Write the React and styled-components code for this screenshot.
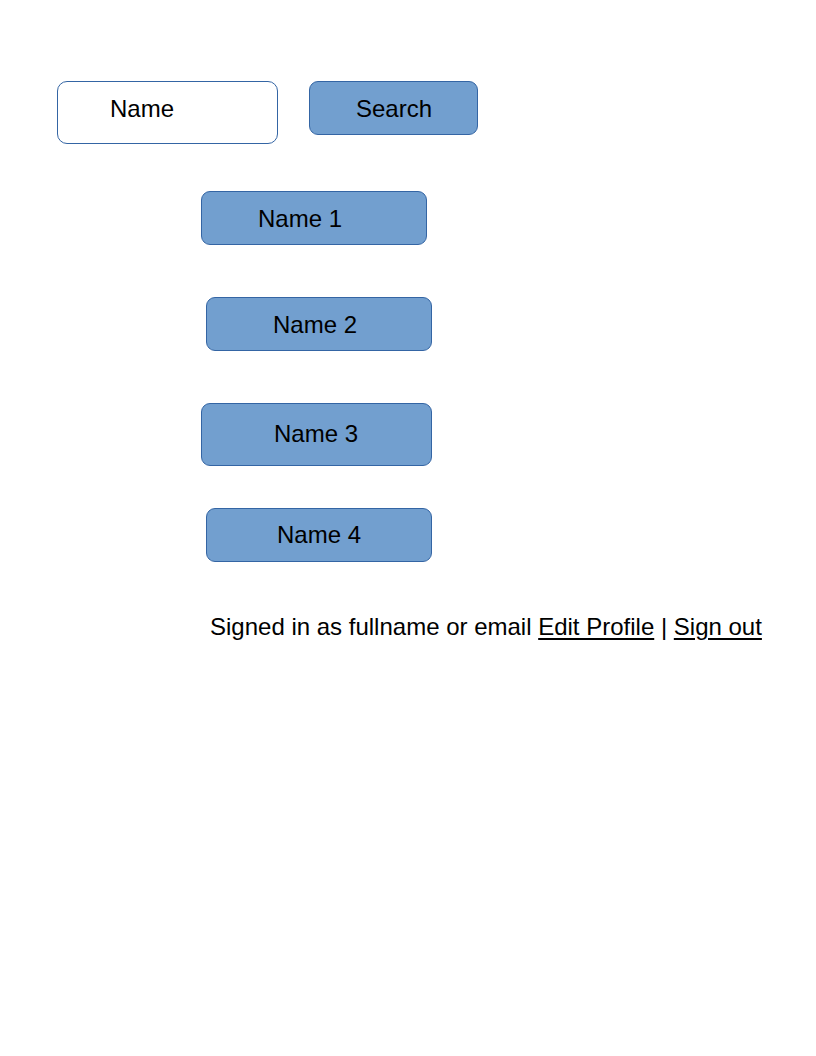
import React from "react";
import styled, { createGlobalStyle } from "styled-components";

const GlobalStyle = createGlobalStyle`
  body {
    margin: 0;
    background: #ffffff;
    font-family: "Liberation Sans", Arial, sans-serif;
    color: #000000;
  }
`;

const Page = styled.div`
  display: flex;
  flex-direction: column;
  align-items: flex-start;
  width: 816px;
  min-height: 1056px;
  padding-top: 81px;
  box-sizing: border-box;
`;

const SearchRow = styled.div`
  display: flex;
  align-items: flex-start;
  gap: 31px;
  margin-left: 57px;
`;

const NameInput = styled.div`
  display: flex;
  align-items: center;
  box-sizing: border-box;
  width: 221px;
  height: 63px;
  padding-left: 52px;
  padding-bottom: 7px;
  border: 1px solid #3465a4;
  border-radius: 10px;
  background: #ffffff;
  font-size: 24px;
`;

const BlueButton = styled.div`
  display: flex;
  align-items: center;
  box-sizing: border-box;
  width: ${(p) => p.$w}px;
  height: ${(p) => p.$h || 54}px;
  margin-left: ${(p) => p.$left || 0}px;
  margin-top: ${(p) => p.$top || 0}px;
  padding-left: ${(p) => p.$indent}px;
  padding-top: ${(p) => p.$lift || 0}px;
  padding-bottom: ${(p) => p.$drop || 0}px;
  border: 1px solid #3465a4;
  border-radius: 9px;
  background: #729fcf;
  font-size: 24px;
`;

const Footer = styled.div`
  margin-left: 210px;
  margin-top: 51px;
  font-size: 24px;
  line-height: 28px;
  white-space: nowrap;
`;

const Link = styled.span`
  text-decoration: underline;
  text-underline-offset: 3px;
`;

const names = [
  { label: "Name 1", left: 201, top: 47, w: 226, h: 54, indent: 56, lift: 2 },
  { label: "Name 2", left: 206, top: 52, w: 226, h: 54, indent: 66, lift: 2 },
  { label: "Name 3", left: 201, top: 52, w: 231, h: 63, indent: 72, drop: 2 },
  { label: "Name 4", left: 206, top: 42, w: 226, h: 54, indent: 70, lift: 0 },
];

export default function App() {
  return (
    <>
      <GlobalStyle />
      <Page>
        <SearchRow>
          <NameInput>Name</NameInput>
          <BlueButton $w={169} $indent={46} $lift={2}>
            Search
          </BlueButton>
        </SearchRow>
        {names.map((n) => (
          <BlueButton
            key={n.label}
            $left={n.left}
            $top={n.top}
            $w={n.w}
            $h={n.h}
            $indent={n.indent}
            $lift={n.lift}
            $drop={n.drop}
          >
            {n.label}
          </BlueButton>
        ))}
        <Footer>
          Signed in as fullname or email <Link>Edit Profile</Link> |{" "}
          <Link>Sign out</Link>
        </Footer>
      </Page>
    </>
  );
}
